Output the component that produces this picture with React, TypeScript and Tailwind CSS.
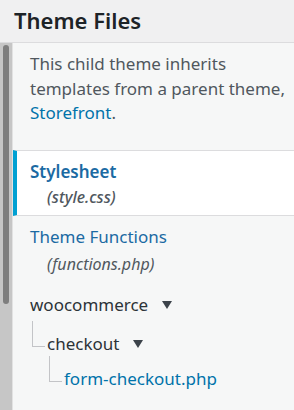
import React from 'react';

const font = { fontFamily: '"Noto Sans", "Open Sans", sans-serif' };

const Caret: React.FC = () => (
  <svg width="12" height="10" viewBox="0 0 12 10" className="ml-[13px] mt-[1px]">
    <path d="M1 1 L11 1 L6 9 Z" fill="#3c434a" />
  </svg>
);

// connector from the parent's name down and across to the child
const Branch: React.FC<{ children: React.ReactNode }> = ({ children }) => (
  <div className="flex items-start pl-[2px]">
    <span className="-mt-[10px] mr-[2px] block h-[26px] w-[13px] shrink-0 border-b border-l border-[#c3c4c7]" />
    <div>{children}</div>
  </div>
);

const App: React.FC = () => {
  return (
    <div className="flex h-[410px] w-[294px] flex-col overflow-hidden bg-[#f6f7f7]" style={font}>
      <div className="h-[43px] shrink-0 border-b border-[#dcdcde] bg-[#f0f0f1] pl-[14px] pt-[3px]">
        <h2 className="text-[22px] font-semibold leading-[34px] text-[#1d2327]">Theme Files</h2>
      </div>
      <div className="flex min-h-0 flex-1">
        {/* scrollbar */}
        <div className="relative w-[13px] shrink-0 border-r border-[#e2e2e2] bg-[#c6c6c6]">
          <div className="absolute left-[3px] top-[2px] h-[259px] w-[6px] rounded-full bg-[#7e7e7e]" />
        </div>
        <div className="flex-1">
          <p className="pl-[17px] pr-[2px] pt-[9px] text-[17px] leading-[24.5px] text-[#50575e]">
            This child theme inherits templates from a parent theme,{' '}
            <span className="text-[#0073aa]">Storefront</span>.
          </p>
          <ul className="mt-[24px]">
            <li className="border-y border-[#dcdcde] border-l-[4px] border-l-[#00a0d2] bg-white pl-[13px] pt-[8px] pb-[6px]">
              <div className="text-[17px] font-semibold leading-[26px] text-[#1b6aa3]">Stylesheet</div>
              <div className="pl-[17px] text-[16px] italic font-medium leading-[24px] text-[#50575e]">(style.css)</div>
            </li>
            <li className="pl-[17px] pt-[8px]">
              <div className="text-[17px] leading-[26px] text-[#1b6aa3]">Theme Functions</div>
              <div className="pl-[17px] text-[16px] italic leading-[28px] text-[#50575e]">(functions.php)</div>
            </li>
            <li className="pl-[17px] pt-[14px]">
              <div className="flex items-center text-[17px] leading-[26px] text-[#2c3338]">
                woocommerce
                <Caret />
              </div>
              <div className="pt-[13px]">
                <Branch>
                  <div className="flex items-center text-[17px] leading-[26px] text-[#2c3338]">
                    checkout
                    <Caret />
                  </div>
                  <div className="pt-[9px]">
                    <Branch>
                      <div className="text-[17px] leading-[26px] text-[#0073aa]">form-checkout.php</div>
                    </Branch>
                  </div>
                </Branch>
              </div>
            </li>
          </ul>
        </div>
      </div>
    </div>
  );
};

export default App;
